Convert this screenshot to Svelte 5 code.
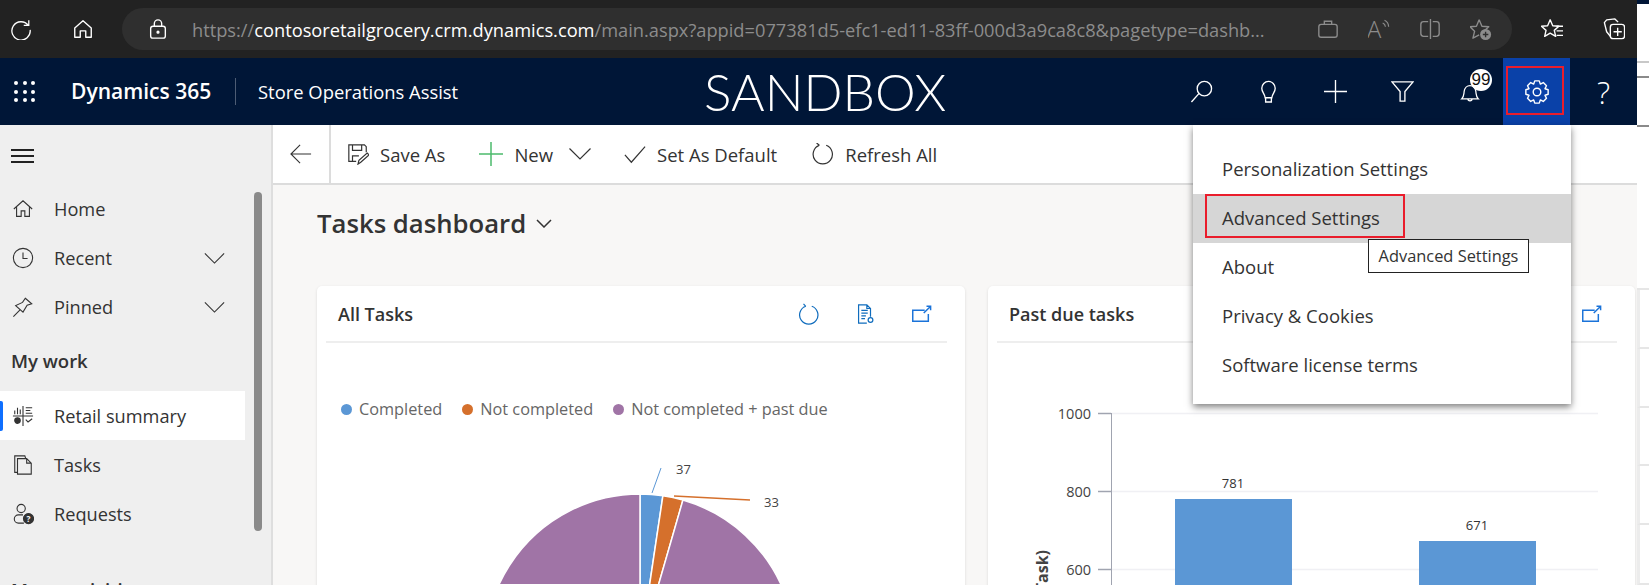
<script>
  const rows = [
    { h: 4, bg: "#001637", line: "none" },
    { h: 59, bg: "#fff", line: "#c8c8c8" },
    { h: 15, bg: "#fff", line: "#8a8a8a" },
    { h: 49, bg: "#fff", line: "#8a8a8a" },
    { h: 163, bg: "#fff", line: "#e6e6e6" },
    { h: 59, bg: "#fff", line: "#e6e6e6", side: true },
    { h: 59, bg: "#fff", line: "#e6e6e6", side: true },
    { h: 58, bg: "#fff", line: "#e6e6e6", side: true },
    { h: 59, bg: "#fff", line: "#e6e6e6", side: true },
    { h: 60, bg: "#fff", line: "#e6e6e6", side: true },
  ];

  const nav_top = [
    { label: "Home", icon: "home" },
    { label: "Recent", icon: "clock", more: true },
    { label: "Pinned", icon: "pin", more: true },
  ];
  const nav_work = [
    { label: "Retail summary", icon: "retail", active: true },
    { label: "Tasks", icon: "tasks" },
    { label: "Requests", icon: "requests" },
  ];
  const menu = [
    "Personalization Settings",
    "Advanced Settings",
    "About",
    "Privacy & Cookies",
    "Software license terms",
  ];

  // pie slices, clockwise from twelve o'clock
  const slices = [
    { value: 37, color: "#5b97d5" },
    { value: 33, color: "#d5702c" },
    { value: 1497, color: "#a074a6" },
  ];
  const cx = 323, cy = 229, r = 155;
  const total = slices.reduce((s, x) => s + x.value, 0);
  let acc = 0;
  const pie = slices.map((s) => {
    const a0 = (acc / total) * Math.PI * 2;
    acc += s.value;
    const a1 = (acc / total) * Math.PI * 2;
    const large = a1 - a0 > Math.PI ? 1 : 0;
    const p = (a) => `${cx + r * Math.sin(a)} ${cy - r * Math.cos(a)}`;
    return { d: `M${cx} ${cy}L${p(a0)}A${r} ${r} 0 ${large} 1 ${p(a1)}Z`, color: s.color };
  });

  // gear outline with eight teeth
  const gear = (() => {
    const c = 12, out = 10.5, inn = 8;
    let d = "";
    for (let i = 0; i < 8; i++) {
      const a = (i / 8) * Math.PI * 2;
      const pts = [
        [inn, a - 0.39], [out, a - 0.2], [out, a + 0.2], [inn, a + 0.39],
      ];
      pts.forEach(([rad, t], j) => {
        const x = (c + rad * Math.cos(t)).toFixed(2);
        const y = (c + rad * Math.sin(t)).toFixed(2);
        d += `${i === 0 && j === 0 ? "M" : "L"}${x} ${y}`;
      });
    }
    return d + "Z";
  })();
</script>

{#snippet side_icon(name)}
  <svg class="side-icon" viewBox="0 0 24 24" fill="none" stroke="#333" stroke-width="1.2">
    {#if name === "home"}
      <path d="M2 12 12 3l10 9M5 10v10h5v-6h4v6h5V10" />
    {:else if name === "clock"}
      <circle cx="12" cy="12" r="10.5" /><path d="M12 6v6.5h5" />
    {:else if name === "pin"}
      <path d="M1.5 22.5 8.5 15.5M14.5 2.5l7 6-5 1.5-4.5 7.5-8-7 7.5-3.5z" />
    {:else if name === "retail"}
      <path d="M1 12h22M12 1v22M3 10V6M6 10V3M9 10V5M15 3h7M15 6h5M15 9h7M15 16l2.5 2.5L22 15" />
      <circle cx="6" cy="17" r="3" fill="#333" />
    {:else if name === "tasks"}
      <path d="M6 20H3V2h11l1 3" /><path d="M6 5h10l5 5v12H6zM16 5v5h5" />
    {:else}
      <circle cx="10" cy="6" r="4.5" />
      <path d="M12 13H7a4.5 4.5 0 0 0 0 9h6" />
      <circle cx="18" cy="17" r="5.5" fill="#333" />
      <text x="18" y="20.5" class="q">?</text>
    {/if}
  </svg>
{/snippet}

{#snippet card_tools()}
  <div class="tools">
    <svg viewBox="0 0 24 24" fill="none" stroke="#0f6cbd" stroke-width="1.3">
      <path d="M15 3.6A10 10 0 1 1 8.5 3.6M8.5 3.6 6 1M8.5 3.6 5.5 5" />
    </svg>
    <svg viewBox="0 0 24 24" fill="none" stroke="#0f6cbd" stroke-width="1.3">
      <path d="M14 22H5V2h9l4 4v9M14 2v4h4M8 8h7M8 11h7M8 14h5M8 17h4" />
      <circle cx="18" cy="18.5" r="2.6" />
    </svg>
    <svg viewBox="0 0 24 24" fill="none" stroke="#1a73d9" stroke-width="1.6">
      <path d="M16 8H3v12h17v-8M15 11l7-7M18 3.5h4.5V8" />
    </svg>
  </div>
{/snippet}

<div class="page">
  <div class="window">
    <header class="chrome">
      <svg class="c-ic refresh" viewBox="0 0 24 24" fill="none" stroke="#fff" stroke-width="1.4">
        <path d="M20 8A10 10 0 1 0 22 13M20.5 2.5V8H15" />
      </svg>
      <svg class="c-ic home" viewBox="0 0 24 24" fill="none" stroke="#fff" stroke-width="1.5" stroke-linejoin="round">
        <path d="M3 11 12 3l9 8v10h-6v-7H9v7H3z" />
      </svg>
      <div class="url">
        <svg class="c-ic" viewBox="0 0 24 24" fill="none" stroke="#fff" stroke-width="1.5">
          <rect x="4" y="9" width="16" height="13" rx="2.5" />
          <path d="M8 9V6a4 4 0 0 1 8 0v3" /><circle cx="12" cy="15.5" r="1" fill="#fff" />
        </svg>
        <div class="url-text">https://<b>contosoretailgrocery.crm.dynamics.com</b>/main.aspx?appid=077381d5-efc1-ed11-83ff-000d3a9ca8c8&amp;pagetype=dashb...</div>
        <div class="url-tools">
          <svg class="c-ic" viewBox="0 0 24 24" fill="none" stroke="#8c8c8c" stroke-width="1.5">
            <rect x="2" y="7" width="20" height="14" rx="2.5" /><path d="M8 7V3.5h8V7" />
          </svg>
          <svg class="c-ic" viewBox="0 0 24 24" fill="none" stroke="#8c8c8c" stroke-width="1.3">
            <text x="-1" y="22" class="read">A</text>
            <path d="M16 5.5a5 5 0 0 1 3 4M18 2.5a8 8 0 0 1 4.5 7" />
          </svg>
          <svg class="c-ic" viewBox="0 0 24 24" fill="none" stroke="#8c8c8c" stroke-width="1.5">
            <path d="M10 4H5a3 3 0 0 0-3 3v10a3 3 0 0 0 3 3h5M15 4h4a3 3 0 0 1 3 3v10a3 3 0 0 1-3 3h-4M12.5 1v22" />
          </svg>
          <svg class="c-ic" viewBox="0 0 24 24" fill="none" stroke="#8c8c8c" stroke-width="1.5" stroke-linejoin="round">
            <path d="M10 2l3 7 7.5 .5-5.5 5 1 3M10 2 7 9l-7 .5 5 5-1.8 7.5 6.8-3.5" />
            <circle cx="17" cy="18" r="6" fill="#8c8c8c" stroke="none" />
            <path d="M17 15v6M14 18h6" stroke="#2f2f2f" />
          </svg>
        </div>
      </div>
      <div class="chrome-end">
        <svg class="c-ic" viewBox="0 0 24 24" fill="none" stroke="#fff" stroke-width="1.5" stroke-linejoin="round">
          <path d="M10 2l2.8 6.5 6.7 .5-5 4.5 1.5 6.5-6-3.5-6 3.5 1.5-6.5-5-4.5 6.7-.5z" />
          <path d="M17 9h7M17 14h7M17 19h7" />
        </svg>
        <svg class="c-ic" viewBox="0 0 24 24" fill="none" stroke="#fff" stroke-width="1.5" stroke-linejoin="round">
          <path d="M8 20 4 15 1.5 5 4 2l9-1 3.5 3.5" />
          <rect x="8" y="7" width="15.5" height="15.5" rx="3" />
          <path d="M16 10.5v9M11.5 15h9" />
        </svg>
      </div>
    </header>

    <nav class="topbar">
      <div class="waffle">
        {#each Array(9) as _}<i></i>{/each}
      </div>
      <span class="product">Dynamics 365</span>
      <span class="app-name">Store Operations Assist</span>
      <span class="sandbox">SANDBOX</span>
      <div class="top-tools">
        <button aria-label="Search">
          <svg viewBox="0 0 24 24" fill="none" stroke="#fff" stroke-width="1.4"><circle cx="15" cy="9" r="7.5" /><path d="M9.5 14 1.5 23" /></svg>
        </button>
        <button aria-label="Ideas">
          <svg viewBox="0 0 24 24" fill="none" stroke="#fff" stroke-width="1.4"><path d="M8.5 18.5C8 14 5 13 5 8.5a7 7 0 0 1 14 0C19 13 16 14 15.5 18.5zM9 18.5V23h6v-4.5" /></svg>
        </button>
        <button aria-label="New">
          <svg viewBox="0 0 24 24" fill="none" stroke="#fff" stroke-width="1.4"><path d="M12 0v24M0 12h24" /></svg>
        </button>
        <button aria-label="Filter">
          <svg viewBox="0 0 24 24" fill="none" stroke="#fff" stroke-width="1.4"><path d="M1 2h22l-8.5 10v10h-5V12z" /></svg>
        </button>
        <button class="bell" aria-label="Notifications">
          <svg viewBox="0 0 24 24" fill="none" stroke="#fff" stroke-width="1.5"><path d="M2 19h20c-3-3-2.5-5-3-9-.5-4-3.5-7-7-7s-6.500 3-7 7c-.5 4 0 6-3 9zM9.5 19a2.5 2.5 0 0 0 5 0" /></svg>
          <span class="badge">99</span>
        </button>
        <button class="gear" aria-label="Settings">
          <svg viewBox="0 0 24 24" fill="none" stroke="#fff" stroke-width="1.3"><path d={gear} stroke-linejoin="round" /><circle cx="12" cy="12" r="3.5" /></svg>
        </button>
        <button class="help">?</button>
      </div>
    </nav>

    <div class="body">
      <aside class="side">
        <div class="burger"><i></i><i></i><i></i></div>
        <div class="side-group">
          {#each nav_top as item}
            <div class="side-item">
              {@render side_icon(item.icon)}
              <span>{item.label}</span>
              {#if item.more}
                <svg class="side-more" viewBox="0 0 22 12" fill="none" stroke="#333" stroke-width="1.2"><path d="M.5 .5 11 11 21.5 .5" /></svg>
              {/if}
            </div>
          {/each}
        </div>
        <div class="side-head">My work</div>
        {#each nav_work as item}
          <div class="side-item" class:active={item.active}>
            {@render side_icon(item.icon)}
            <span>{item.label}</span>
          </div>
        {/each}
        <div class="side-head next">More activities</div>
        <div class="scroll"></div>
      </aside>

      <main class="main">
        <div class="toolbar">
          <div class="back">
            <svg viewBox="0 0 24 24" fill="none" stroke="#333" stroke-width="1.2"><path d="M23 12H1M11 2 1 12l10 10" /></svg>
          </div>
          <div class="cmd save">
            <svg viewBox="0 0 24 24" fill="none" stroke="#333" stroke-width="1.3">
              <path d="M10 20H2V2h17l2 2v6M6 2v6h10V2M6 20v-6h7" /><path d="M12 23l1-4 9-8 2 2-9 8z" />
            </svg>
            Save As
          </div>
          <div class="cmd new">
            <svg viewBox="0 0 24 24" fill="none" stroke="#4cbb6c" stroke-width="1.5"><path d="M12 0v24M0 12h24" /></svg>
            New
            <svg class="chev" viewBox="0 0 22 12" fill="none" stroke="#333" stroke-width="1.2"><path d="M.5 .5 11 11 21.5 .5" /></svg>
          </div>
          <div class="cmd default">
            <svg viewBox="0 0 24 24" fill="none" stroke="#333" stroke-width="1.3"><path d="M1 13l7 8L23 4" /></svg>
            Set As Default
          </div>
          <div class="cmd refresh-all">
            <svg viewBox="0 0 24 24" fill="none" stroke="#333" stroke-width="1.3"><path d="M15.5 2.5A10.5 10.5 0 1 1 8 2.5M8 2.5 5 0M8 2.5 4.5 4.5" /></svg>
            Refresh All
          </div>
        </div>

        <div class="dash-title">
          <h1>Tasks dashboard</h1>
          <svg viewBox="0 0 16 9" fill="none" stroke="#333" stroke-width="1.5"><path d="M1 1l7 7 7-7" /></svg>
        </div>

        <div class="cards">
          <section class="card">
            <div class="card-head"><h2>All Tasks</h2>{@render card_tools()}</div>
            <div class="legend">
              <span class="dot blue">Completed</span>
              <span class="dot orange">Not completed</span>
              <span class="dot purple">Not completed + past due</span>
            </div>
            <svg class="pie" width="648" height="164" viewBox="0 0 648 164">
              {#each pie as s}
                <path d={s.d} fill={s.color} stroke="#fff" stroke-width="1.5" />
              {/each}
              <path d="M335 73 344 48" stroke="#5b97d5" fill="none" />
              <path d="M357 76 433 80" stroke="#d5702c" stroke-width="1.5" fill="none" />
              <text x="359" y="54">37</text>
              <text x="447" y="87">33</text>
            </svg>
          </section>

          <section class="card">
            <div class="card-head"><h2>Past due tasks</h2>{@render card_tools()}</div>
            <svg class="bars" width="647" height="242" viewBox="0 0 647 242">
              {#each [[70, "1000"], [148, "800"], [226, "600"]] as [y, label]}
                <path d="M123 {y}.5H610" stroke="#f0f0f4" stroke-width="1.5" />
                <path d="M110 {y}.5H123" stroke="#a0a4b0" stroke-width="1.5" />
                <text class="tick" x="103" y={y + 6}>{label}</text>
              {/each}
              <path d="M123.5 70V242" stroke="#a0a4b0" />
              <rect x="187" y="156" width="117" height="90" fill="#5b97d5" />
              <rect x="431" y="198" width="117" height="50" fill="#5b97d5" />
              <text class="val" x="245" y="145">781</text>
              <text class="val" x="489" y="187">671</text>
              <text class="axis" transform="translate(60 207) rotate(-90)" text-anchor="end">Count:All (Task)</text>
            </svg>
          </section>
        </div>
      </main>

      <div class="menu">
        {#each menu as item, i}
          <div class="menu-item" class:hover={i === 1}>{item}</div>
        {/each}
        <div class="mark"></div>
        <div class="tip">Advanced Settings</div>
      </div>
    </div>
  </div>

  <div class="strip">
    {#each rows as row}
      <div
        class="strip-row"
        class:side={row.side}
        style="height:{row.h}px;background:{row.bg};border-bottom-color:{row.line}"
      ></div>
    {/each}
  </div>
</div>

<style>
  :global(body) {
    margin: 0;
    overflow: hidden;
    background: #fff;
  }

  .page {
    display: flex;
    width: 1649px;
    height: 585px;
    overflow: hidden;
    font-family: "Open Sans", "Noto Sans", sans-serif;
    color: #333;
  }

  .window {
    position: relative;
    display: flex;
    flex-direction: column;
    width: 1637px;
    height: 585px;
    flex: none;
  }

  .strip {
    flex: 1;
  }

  .strip-row {
    box-sizing: border-box;
    border-bottom: 2px solid transparent;
  }

  .strip-row.side {
    border-left: 3px solid #ececec;
  }

  /* browser chrome */
  .chrome {
    display: flex;
    align-items: center;
    height: 58px;
    flex: none;
    background: #222;
    padding-left: 10px;
    box-sizing: border-box;
  }

  .c-ic {
    width: 22px;
    height: 22px;
    flex: none;
  }

  .chrome .home {
    margin-left: 40px;
  }

  .url {
    display: flex;
    align-items: center;
    width: 1390px;
    height: 42px;
    margin-left: 28px;
    padding-left: 25px;
    box-sizing: border-box;
    border-radius: 21px;
    background: #2f2f2f;
  }

  .url-text {
    width: 1100px;
    margin-left: 23px;
    flex: none;
    font-size: 18.25px;
    color: #8c8c8c;
    white-space: nowrap;
  }

  .url-text b {
    font-weight: 400;
    color: #fff;
  }

  .url-tools {
    display: flex;
    gap: 29px;
    margin-left: 25px;
  }

  .chrome-end {
    display: flex;
    gap: 40px;
    margin-left: 29px;
  }

  /* dynamics top bar */
  .topbar {
    position: relative;
    display: flex;
    align-items: center;
    height: 67px;
    flex: none;
    background: #001637;
    color: #fff;
    padding-left: 14px;
    box-sizing: border-box;
  }

  .waffle {
    display: grid;
    grid-template-columns: repeat(3, 4px);
    gap: 4.5px;
    width: 21px;
  }

  .waffle i {
    width: 4px;
    height: 4px;
    border-radius: 50%;
    background: #fff;
  }

  .product {
    margin-left: 36px;
    width: 164px;
    font-size: 21px;
    font-weight: 600;
    border-right: 1px solid #4d5c74;
    line-height: 27px;
  }

  .app-name {
    margin-left: 22px;
    font-size: 18.4px;
  }

  .sandbox {
    position: absolute;
    left: 704px;
    top: 0;
    line-height: 67px;
    font-family: "Lato", sans-serif;
    font-weight: 300;
    font-size: 51.4px;
  }

  .top-tools {
    display: flex;
    align-items: stretch;
    height: 67px;
    position: absolute;
    left: 1168px;
  }

  .top-tools button {
    position: relative;
    display: flex;
    align-items: center;
    justify-content: center;
    width: 67px;
    padding: 0;
    border: 0;
    background: none;
    color: #fff;
  }

  .top-tools svg {
    width: 23px;
    height: 23px;
  }

  .top-tools .bell svg {
    width: 20px;
    height: 20px;
    margin-top: 3px;
  }

  .top-tools .gear svg {
    width: 26px;
    height: 26px;
  }

  .top-tools .gear {
    background: #0a41a8;
  }

  .top-tools .gear::after {
    content: "";
    position: absolute;
    left: 3px;
    top: 8px;
    width: 58px;
    height: 49px;
    box-sizing: border-box;
    border: 2px solid #ea1d2c;
  }

  .top-tools .help {
    font-family: "Open Sans", sans-serif;
    font-weight: 300;
    font-size: 31px;
  }

  .badge {
    position: absolute;
    left: 34px;
    top: 11px;
    width: 22px;
    height: 22px;
    border-radius: 50%;
    background: #fff;
    color: #111;
    font-size: 17px;
    line-height: 22px;
    text-align: center;
  }

  /* page body */
  .body {
    position: relative;
    display: flex;
    flex: 1;
    min-height: 0;
  }

  .side {
    position: relative;
    width: 271px;
    flex: none;
    background: #efefef;
    border-right: 2px solid #dedede;
    overflow: hidden;
  }

  .burger {
    display: grid;
    gap: 4px;
    width: 23px;
    margin: 24px 0 0 11px;
  }

  .burger i {
    height: 2px;
    background: #222;
  }

  .side-group {
    margin-top: 21px;
  }

  .side-item {
    display: flex;
    align-items: center;
    height: 49px;
    width: 245px;
    box-sizing: border-box;
    padding-left: 12px;
    font-size: 18.2px;
    position: relative;
  }

  .side-item span {
    margin-left: 20px;
  }

  .side-item.active {
    background: #fff;
  }

  .side-item.active::before {
    content: "";
    position: absolute;
    left: 0;
    top: 10px;
    width: 3px;
    height: 30px;
    border-radius: 0 2px 2px 0;
    background: #0f6fff;
  }

  .side-icon {
    width: 22px;
    height: 22px;
    flex: none;
  }

  .side-more {
    position: absolute;
    left: 204px;
    top: 20px;
    width: 21px;
    height: 11px;
  }

  .side-head {
    height: 47px;
    margin-top: 13px;
    padding-left: 11px;
    font-size: 18.5px;
    font-weight: 600;
    line-height: 33px;
  }

  .side-head.next {
    margin-top: 35px;
  }

  .scroll {
    position: absolute;
    left: 254px;
    top: 67px;
    width: 8px;
    height: 339px;
    border-radius: 4px;
    background: #8a8a8a;
  }

  .q {
    font-size: 9px;
    font-weight: 700;
    text-anchor: middle;
    fill: #fff;
    stroke: none;
  }

  .read {
    font-size: 26px;
    font-weight: 300;
    fill: #8c8c8c;
    stroke: none;
  }

  .main {
    flex: 1;
    min-width: 0;
    background: #f8f7f6;
    overflow: hidden;
  }

  .toolbar {
    position: relative;
    display: flex;
    align-items: center;
    height: 60px;
    background: #fff;
    border-bottom: 2px solid #dcdcdc;
    box-sizing: border-box;
    font-size: 18.5px;
  }

  .back {
    display: flex;
    align-items: center;
    justify-content: center;
    width: 56px;
    height: 100%;
    border-right: 2px solid #dcdcdc;
    box-sizing: content-box;
  }

  .back svg {
    width: 22px;
    height: 22px;
  }

  .cmd {
    display: flex;
    align-items: center;
    gap: 11px;
    white-space: nowrap;
  }

  .cmd svg {
    width: 22px;
    height: 22px;
  }

  .cmd .chev {
    width: 22px;
    height: 12px;
    margin-left: 5px;
  }

  .save {
    margin-left: 16px;
  }

  .new {
    margin-left: 34px;
  }

  .new svg:first-child {
    width: 24px;
    height: 24px;
  }

  .default {
    margin-left: 33px;
  }

  .refresh-all {
    margin-left: 35px;
  }

  .dash-title {
    display: flex;
    align-items: center;
    gap: 10px;
    height: 76px;
    padding-left: 44px;
  }

  .dash-title h1 {
    margin: 0;
    font-size: 25.7px;
    font-weight: 600;
  }

  .dash-title svg {
    width: 16px;
    height: 9px;
  }

  .cards {
    display: flex;
    gap: 23px;
    padding: 25px 2px 0 44px;
  }

  .card {
    flex: 1;
    height: 400px;
    border-radius: 5px;
    background: #fff;
    box-shadow: 0 1px 3px rgba(0, 0, 0, 0.12);
  }

  .card-head {
    display: flex;
    align-items: center;
    justify-content: space-between;
    box-sizing: border-box;
    height: 57px;
    margin: 0 18px 0 9px;
    padding: 0 15px 0 12px;
    border-bottom: 2px solid #eeeeee;
  }

  .card-head h2 {
    margin: 0;
    font-size: 18px;
    font-weight: 600;
  }

  .tools {
    display: flex;
    gap: 34px;
  }

  .tools svg {
    width: 22px;
    height: 22px;
  }

  .legend {
    display: flex;
    gap: 20px;
    height: 21px;
    margin-top: 56px;
    padding-left: 24px;
    font-size: 16.3px;
    line-height: 21px;
    color: #666;
  }

  .dot {
    display: flex;
    align-items: center;
    gap: 7px;
  }

  .dot::before {
    content: "";
    width: 11px;
    height: 11px;
    border-radius: 50%;
  }

  .dot.blue::before {
    background: #5b97d5;
  }

  .dot.orange::before {
    background: #d5702c;
  }

  .dot.purple::before {
    background: #a074a6;
  }

  .pie,
  .bars {
    display: block;
  }

  .pie text {
    font-size: 13px;
    fill: #444;
  }

  .tick {
    font-size: 14.5px;
    fill: #444;
    text-anchor: end;
  }

  .val {
    font-size: 13px;
    fill: #333;
    text-anchor: middle;
  }

  .axis {
    font-size: 16px;
    font-weight: 700;
    fill: #444;
  }

  /* settings flyout */
  .menu {
    position: absolute;
    left: 1193px;
    top: 0;
    width: 378px;
    height: 279px;
    box-sizing: border-box;
    padding-top: 20px;
    background: #fff;
    box-shadow: 0 3px 7px rgba(0, 0, 0, 0.5);
  }

  .menu-item {
    height: 49px;
    padding-left: 29px;
    font-size: 18.5px;
    line-height: 47px;
  }

  .menu-item.hover {
    background: #d6d6d6;
  }

  .mark {
    position: absolute;
    left: 12px;
    top: 69px;
    width: 200px;
    height: 44px;
    box-sizing: border-box;
    border: 2px solid #ea1d2c;
  }

  .tip {
    position: absolute;
    left: 175px;
    top: 114px;
    width: 161px;
    height: 34px;
    box-sizing: border-box;
    border: 1.5px solid #222;
    background: #fff;
    font-size: 16.4px;
    line-height: 31px;
    text-align: center;
  }
</style>
